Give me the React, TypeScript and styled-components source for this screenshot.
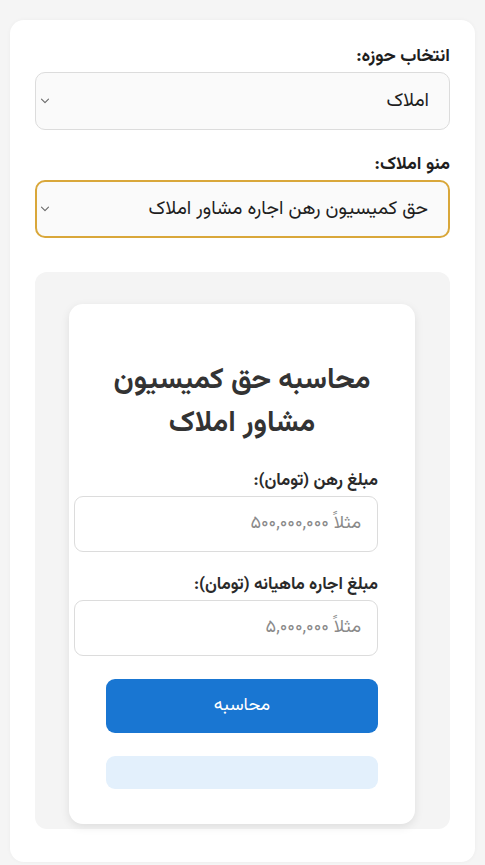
import React from "react";
import styled, { createGlobalStyle } from "styled-components";

const Global = createGlobalStyle`
  html, body { margin: 0; padding: 0; background: #f5f5f5; }
  body { font-family: "Vazirmatn", "Noto Sans Arabic", "DejaVu Sans", sans-serif; direction: rtl; }
  * { box-sizing: border-box; }
`;

const Page = styled.div`
  padding: 20px 10px 2px;
`;

const Panel = styled.div`
  background: #ffffff;
  border-radius: 14px;
  padding: 26px 25px 33px;
  box-shadow: 0 0 4px rgba(0,0,0,0.04);
`;

const FieldLabel = styled.div<{ $gap?: number }>`
  font-size: 18px;
  font-weight: 700;
  color: #1e1e1e;
  line-height: 22px;
  margin-top: ${(p) => p.$gap ?? 0}px;
  margin-bottom: 4px;
`;

const SelectBox = styled.div<{ $active?: boolean }>`
  height: 58px;
  display: flex;
  align-items: center;
  justify-content: space-between;
  padding: 0 20px 0 ${(p) => (p.$active ? 3 : 4)}px;
  background: #fafafa;
  border: ${(p) => (p.$active ? "2px solid #d9a73a" : "1px solid #dcdcdc")};
  border-radius: 10px;
  font-size: 19px;
  color: #1e1e1e;
`;

const Chevron = () => (
  <svg width="10" height="6" viewBox="0 0 10 6" fill="none">
    <path d="M1.5 1.2l3.5 3.5 3.5-3.5" stroke="#6a6a6a" strokeWidth="1.1" strokeLinecap="round" strokeLinejoin="round" />
  </svg>
);

const Gray = styled.div`
  margin-top: 34px;
  background: #f4f4f4;
  border-radius: 12px;
  padding: 32px 35px 5px 34px;
`;

const Card = styled.div`
  background: #fff;
  border-radius: 14px;
  box-shadow: 0 3px 10px rgba(0,0,0,0.09);
  padding: 56px 37px 35px;
`;

const Title = styled.h2`
  margin: 0 0 24px;
  text-align: center;
  font-size: 29px;
  line-height: 43px;
  font-weight: 700;
  color: #333;
`;

const InputLabel = styled.div<{ $gap?: number }>`
  font-size: 17px;
  font-weight: 700;
  color: #2a2a2a;
  line-height: 22px;
  margin-top: ${(p) => p.$gap ?? 0}px;
  margin-bottom: 4px;
`;

const InputBox = styled.div`
  height: 56px;
  width: calc(100% + 32px);
  display: flex;
  align-items: center;
  padding: 0 16px;
  border: 1px solid #dcdcdc;
  border-radius: 9px;
  background: #fff;
  font-size: 18px;
  color: #8a8a8a;
`;

const Button = styled.div`
  margin-top: 23px;
  height: 54px;
  border-radius: 9px;
  background: #1976d2;
  color: #fff;
  font-size: 18px;
  display: flex;
  align-items: center;
  justify-content: center;
`;

const Result = styled.div`
  margin-top: 23px;
  height: 33px;
  border-radius: 9px;
  background: #e3f0fc;
`;

export default function App() {
  return (
    <>
      <Global />
      <Page>
        <Panel>
          <FieldLabel>انتخاب حوزه:</FieldLabel>
          <SelectBox>
            <span>املاک</span>
            <Chevron />
          </SelectBox>
          <FieldLabel $gap={24}>منو املاک:</FieldLabel>
          <SelectBox $active>
            <span>حق کمیسیون رهن اجاره مشاور املاک</span>
            <Chevron />
          </SelectBox>
          <Gray>
            <Card>
              <Title>
                محاسبه حق کمیسیون
                <br />
                مشاور املاک
              </Title>
              <InputLabel>مبلغ رهن (تومان):</InputLabel>
              <InputBox>مثلاً ۵۰۰,۰۰۰,۰۰۰</InputBox>
              <InputLabel $gap={22}>مبلغ اجاره ماهیانه (تومان):</InputLabel>
              <InputBox>مثلاً ۵,۰۰۰,۰۰۰</InputBox>
              <Button>محاسبه</Button>
              <Result />
            </Card>
          </Gray>
        </Panel>
      </Page>
    </>
  );
}
